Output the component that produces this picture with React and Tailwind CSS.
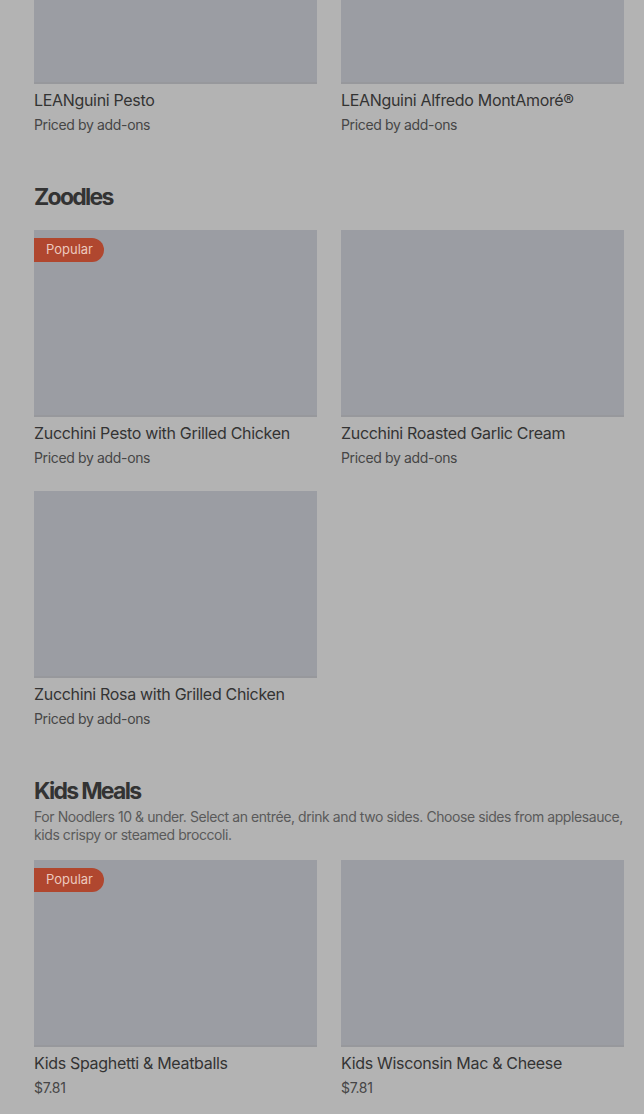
const sections = [
  {
    title: null,
    items: [
      { name: "LEANguini Pesto", price: "Priced by add-ons" },
      { name: "LEANguini Alfredo MontAmoré®", price: "Priced by add-ons" },
    ],
  },
  {
    title: "Zoodles",
    items: [
      { name: "Zucchini Pesto with Grilled Chicken", price: "Priced by add-ons", popular: true },
      { name: "Zucchini Roasted Garlic Cream", price: "Priced by add-ons" },
      { name: "Zucchini Rosa with Grilled Chicken", price: "Priced by add-ons" },
    ],
  },
  {
    title: "Kids Meals",
    desc: "For Noodlers 10 & under. Select an entrée, drink and two sides. Choose sides from applesauce, kids crispy or steamed broccoli.",
    items: [
      { name: "Kids Spaghetti & Meatballs", price: "$7.81", popular: true },
      { name: "Kids Wisconsin Mac & Cheese", price: "$7.81" },
    ],
  },
];

function ItemCard({ item }) {
  return (
    <div className="flex flex-col">
      <div className="relative h-[187px] bg-[#9b9da3] border-b-2 border-[#97989c]">
        {item.popular && (
          <span className="absolute left-0 top-2 h-6 pl-3 pr-[11px] flex items-center rounded-r-full bg-[#b0472f] text-[13px] text-[#ecc9be]">
            Popular
          </span>
        )}
      </div>
      <div className="mt-1 text-[16px] leading-6 tracking-[-0.02em] text-[#333333]">{item.name}</div>
      <div className="mt-[3px] text-[14px] leading-5 tracking-tight text-[#464646]">{item.price}</div>
    </div>
  );
}

export default function App() {
  return (
    <div
      className="min-h-[1114px] bg-[#b3b3b3] pl-[34px] pr-[20px] overflow-hidden"
      style={{ fontFamily: "Inter, 'Liberation Sans', sans-serif" }}
    >
      <div className="-mt-[103px] flex flex-col gap-[46px]">
        {sections.map((section, i) => (
          <section key={i} className="flex flex-col">
            {section.title && (
              <h2 className="text-[23px] leading-8 font-bold tracking-[-0.075em] text-[#333333]">
                {section.title}
              </h2>
            )}
            {section.desc && (
              <p className="mt-px text-[14px] leading-[18px] tracking-[-0.03em] text-[#5a5a5a]">
                {section.desc}
              </p>
            )}
            <div className={`grid grid-cols-2 gap-x-6 gap-y-[23px] ${section.title ? (section.desc ? "mt-4" : "mt-[17px]") : ""}`}>
              {section.items.map((item) => (
                <ItemCard key={item.name} item={item} />
              ))}
            </div>
          </section>
        ))}
      </div>
    </div>
  );
}
